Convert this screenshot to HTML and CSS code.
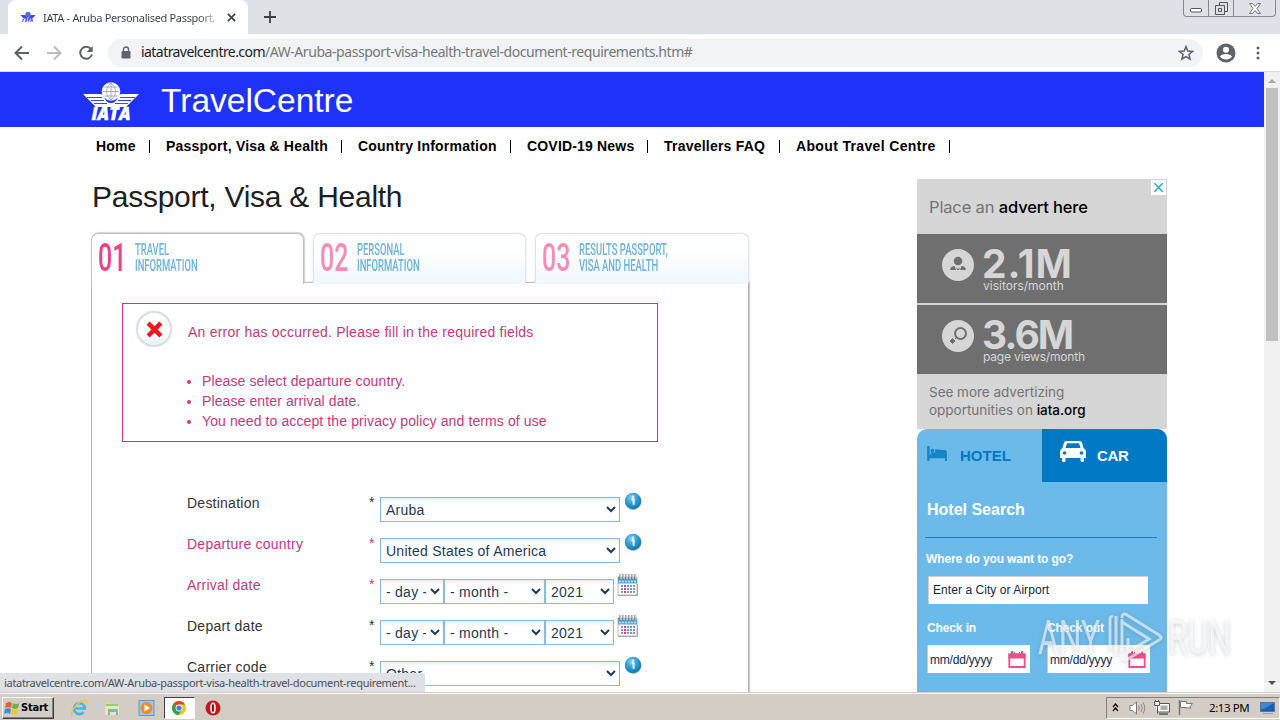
FILE: index.html
```html
<!DOCTYPE html>
<html lang="en">
<head>
  <meta charset="UTF-8" />
  <meta name="viewport" content="width=device-width, initial-scale=1.0" />
  <title>IATA - Aruba Personalised Passport, Visa &amp; Health</title>
  <link rel="stylesheet" href="styles.css">
</head>
<body>
  <svg width="0" height="0" class="defs">
    <defs>
      <radialGradient id="blueBall" cx="40%" cy="30%" r="70%">
        <stop offset="0" stop-color="#7fd0f2" /><stop offset=".55" stop-color="#2a9bd4" /><stop offset="1" stop-color="#1377b0" />
      </radialGradient>
      <symbol id="info" viewBox="0 0 18 18">
        <circle cx="9.3" cy="9.8" r="8.2" fill="#b5bcc2" />
        <circle cx="9" cy="9" r="8.2" fill="url(#blueBall)" />
        <path d="M7.600 7.200h2v5.600" stroke="#fff" stroke-width="1.900" fill="none" />
        <circle cx="9" cy="4.600" r="1.200" fill="#fff" />
      </symbol>
      <symbol id="calendar" viewBox="0 0 22 24">
        <path d="M1 4h19v18H1z" fill="#fff" stroke="#bbb" />
        <path d="M1 22.500h19.500V11" fill="none" stroke="#a5a5a5" />
        <path d="M1 4h19v6.500H1z" fill="#57a8d8" />
        <path d="M2 8.500h17" stroke="#b8dcf2" stroke-width="1.500" stroke-dasharray="2 1" />
        <path d="M3 1v6M6 1v6M9 1v6M12 1v6M15 1v6M18 1v6" stroke="#777" stroke-width="1.200" />
        <path d="M4 1v5M7 1v5M10 1v5M13 1v5M16 1v5M19 1v5" stroke="#e4e4e4" stroke-width="1" />
        <path d="M4 13h14M4 16h14M4 19h14" stroke="#7f97c4" stroke-width="2" stroke-dasharray="2 1" />
        <path d="M7 16h2M7 19h2M7 13h2" stroke="#d23c9c" stroke-width="2" />
      </symbol>
      <symbol id="date" viewBox="0 0 18 18">
        <path d="M1.300 3.500h15.400v12.500H1.300z" fill="#fff" stroke="#ee4d8b" stroke-width="1.800" />
        <path d="M.5 2.500h17v5H.5zM3 0h2v4H3zM13 0h2v4h-2zM6 1h1v2H6zM11 1h1v2h-1z" fill="#ee4d8b" />
      </symbol>
      <symbol id="iata" viewBox="0 0 58 38">
        <path d="M1 12h17q3 0 4 3 2 6 7 6t7-6q1-3 4-3h17l-13 13H14z" />
        <path d="M5 15.500h15M9 18.500h13M12 21.500h13M53 15.500H38M49 18.500H36M46 21.500H33" class="feathers" />
        <circle cx="29" cy="9.500" r="9.300" />
        <path d="M29 1v17M21 9.500h16M22.500 5h13M22.500 14h13M29 1c-6 5-6 12 0 17M29 1c6 5 6 12 0 17" fill="none" class="globe" />
      </symbol>
    </defs>
  </svg>

  <div class="window">
    <div class="tab-strip">
      <div class="tab">
        <svg class="favicon" viewBox="0 0 58 38"><use href="#iata" /><path d="M9 36l4-10M19 36l4-9 2 9M28 28h9M32 28l-2 8M38 36l5-9 3 9" stroke="#4a5be0" stroke-width="4" fill="none" /></svg>
        <span class="tab-title">IATA - Aruba Personalised Passport,</span>
        <svg class="tab-close" viewBox="0 0 10 10"><path d="M1 1l8 8M9 1L1 9" /></svg>
      </div>
      <svg class="new-tab" viewBox="0 0 12 12"><path d="M6 0v12M0 6h12" /></svg>
      <div class="win-buttons">
        <span class="win-min"><svg viewBox="0 0 13 5"><rect x=".5" y=".5" width="11" height="3.500" rx="1" fill="#fff" stroke="#555" /></svg></span>
        <span class="win-max"><svg viewBox="0 0 13 13"><path d="M4.500 3V.5h8v9H10M.5 3.500h9v9h-9zM3.500 6.500h3v3h-3z" fill="none" stroke="#555" /></svg></span>
        <span class="win-close"><svg viewBox="0 0 12 11"><path d="M.5.5h3L6 3.500 8.500.5h3L8 5.500l3.500 5h-3L6 7.500l-2.500 3h-3L4 5.500z" fill="#fff" stroke="#777" /></svg></span>
      </div>
    </div>

    <div class="toolbar">
      <svg class="nav-icon" viewBox="0 0 16 16"><path d="M15 8H2M8 1.500L1.500 8 8 14.500" /></svg>
      <svg class="nav-icon disabled" viewBox="0 0 16 16"><path d="M1 8h13M8 1.500L14.500 8 8 14.500" /></svg>
      <svg class="nav-icon" viewBox="0 0 16 16"><path d="M13.300 4.500A6 6 0 1 0 14 9.500" /><path d="M14.700 1v6h-6z" class="fill" /></svg>
      <div class="omnibox">
        <svg class="lock" viewBox="0 0 10 13"><path d="M2.500 6V3.500a2.500 2.500 0 0 1 5 0V6" fill="none" stroke="#5f6368" stroke-width="1.400" /><rect x="0.500" y="5" width="9" height="7.500" rx="1" fill="#5f6368" /></svg>
        <span class="url"><b>iatatravelcentre.com</b>/AW-Aruba-passport-visa-health-travel-document-requirements.htm#</span>
        <svg class="star" viewBox="0 0 16 16"><path d="M8 1.600l1.800 4.500 4.800.3-3.700 3.100 1.200 4.700L8 11.600l-4.100 2.600 1.200-4.700L1.400 6.400l4.800-.3z" /></svg>
      </div>
      <svg class="profile" viewBox="0 0 20 20"><circle cx="10" cy="10" r="9.500" fill="#5f6368" /><circle cx="10" cy="6.800" r="3" fill="#fff" /><path d="M4 13.600c1.500-3.400 10.500-3.400 12 0-2.600 4-9.400 4-12 0z" fill="#fff" /></svg>
      <svg class="menu-dots" viewBox="0 0 4 14"><circle cx="2" cy="2" r="1.500" /><circle cx="2" cy="7" r="1.500" /><circle cx="2" cy="12" r="1.500" /></svg>
    </div>

    <div class="viewport">
      <div class="page">
        <header class="site-header">
          <div class="logo">
            <svg viewBox="0 0 58 26"><use href="#iata" width="58" height="38" /></svg>
            <span>IATA</span>
          </div>
          <span class="site-name">TravelCentre</span>
        </header>
        <nav class="site-nav">
          <a class="w-home">Home</a>
          <a class="w-passport">Passport, Visa &amp; Health</a>
          <a class="w-country">Country Information</a>
          <a class="w-covid">COVID-19 News</a>
          <a class="w-faq">Travellers FAQ</a>
          <a class="w-about">About Travel Centre</a>
        </nav>

        <div class="columns">
          <main class="content">
            <h1>Passport, Visa &amp; Health</h1>
            <div class="steps">
              <div class="step active"><span class="num">01</span><span class="step-text">TRAVEL<br>INFORMATION</span></div>
              <div class="step"><span class="num">02</span><span class="step-text">PERSONAL<br>INFORMATION</span></div>
              <div class="step"><span class="num">03</span><span class="step-text">RESULTS PASSPORT,<br>VISA AND HEALTH</span></div>
            </div>
            <div class="panel">
              <div class="error-box">
                <div class="error-icon"><svg viewBox="0 0 16 16"><path d="M2 2l12 12M14 2L2 14" /></svg></div>
                <div class="error-text">
                  <p>An error has occurred. Please fill in the required fields</p>
                  <ul>
                    <li>Please select departure country.</li>
                    <li>Please enter arrival date.</li>
                    <li>You need to accept the privacy policy and terms of use</li>
                  </ul>
                </div>
              </div>

              <form class="travel-form">
                <div class="row">
                  <label>Destination</label><span class="req">*</span>
                  <select class="wide"><option>Aruba</option></select>
                  <svg class="info"><use href="#info" /></svg>
                </div>
                <div class="row missing">
                  <label>Departure country</label><span class="req">*</span>
                  <select class="wide"><option>United States of America</option></select>
                  <svg class="info"><use href="#info" /></svg>
                </div>
                <div class="row missing">
                  <label>Arrival date</label><span class="req">*</span>
                  <select class="day"><option>- day -</option></select><select class="month"><option>- month -</option></select><select class="year"><option>2021</option></select>
                  <svg class="cal"><use href="#calendar" /></svg>
                </div>
                <div class="row">
                  <label>Depart date</label><span class="req">*</span>
                  <select class="day"><option>- day -</option></select><select class="month"><option>- month -</option></select><select class="year"><option>2021</option></select>
                  <svg class="cal"><use href="#calendar" /></svg>
                </div>
                <div class="row">
                  <label>Carrier code</label><span class="req">*</span>
                  <select class="wide"><option>Other</option></select>
                  <svg class="info"><use href="#info" /></svg>
                </div>
              </form>
            </div>
          </main>

          <aside class="sidebar">
            <div class="advert">
              <svg class="ad-close" viewBox="0 0 16 16"><path d="M3.500 3.500l9 9M12.500 3.500l-9 9" /></svg>
              <div class="ad-top">Place an <b>advert here</b></div>
              <div class="ad-stat">
                <svg viewBox="0 0 32 32"><circle cx="16" cy="16" r="16" fill="#d6d6d6" /><circle cx="16" cy="12" r="4.300" fill="#6f6f6f" /><path d="M8 21c.5-3 2-4 4.500-4l3.500 3 3.500-3c2.500 0 4 1 4.500 4z" fill="#6f6f6f" /><path d="M13 17l1.500 4M19 17l-1.500 4" stroke="#d6d6d6" /></svg>
                <div><strong>2.1M</strong><small>visitors/month</small></div>
              </div>
              <div class="ad-stat">
                <svg viewBox="0 0 32 32"><circle cx="16" cy="16" r="16" fill="#d6d6d6" /><circle cx="18.500" cy="13.500" r="5.500" fill="none" stroke="#6f6f6f" stroke-width="2" /><path d="M8 21l2.500-2.500L13 21l-2.500 2.500zM13 19l2-2" fill="#6f6f6f" stroke="#6f6f6f" /></svg>
                <div><strong class="views">3.6M</strong><small class="views-label">page views/month</small></div>
              </div>
              <div class="ad-bottom">See more advertizing<br>opportunities on <b>iata.org</b></div>
            </div>

            <div class="booking">
              <div class="book-tabs">
                <div class="book-tab"><svg class="bed" viewBox="0 0 22 16"><path d="M0 0h2.500v9.500H21V16h-2v-3H2.500v3H0z" /><circle cx="5.500" cy="5" r="2" /><path d="M3.500 7h5V3.500L20 4.500q1 .5 1 5H3.500z" /></svg>HOTEL</div>
                <div class="book-tab dark"><svg class="car" viewBox="0 0 26 21"><path d="M6.500 0h13q2 0 2.500 1.500L23.500 7Q26 8 26 10.500V17h-2v2.500q0 1.500-1.700 1.500t-1.800-1.500V17h-15v2.500Q5.500 21 3.700 21T2 19.500V17H0v-6.500Q0 8 2.500 7L4 1.500Q4.500 0 6.500 0z" /><path d="M7 2.300h12l1.500 4.700h-15z" fill="#0078c4" /><circle cx="4.500" cy="12" r="1.800" fill="#0078c4" /><circle cx="21.500" cy="12" r="1.800" fill="#0078c4" /></svg>CAR</div>
              </div>
              <h2>Hotel Search</h2>
              <div class="field-label where">Where do you want to go?</div>
              <div class="city">Enter a City or Airport</div>
              <div class="dates">
                <div><div class="field-label">Check in</div><div class="date-box">mm/dd/yyyy<svg><use href="#date" /></svg></div></div>
                <div><div class="field-label">Check out</div><div class="date-box">mm/dd/yyyy<svg><use href="#date" /></svg></div></div>
              </div>
            </div>
          </aside>
        </div>
      </div>
      <div class="scrollbar">
        <svg viewBox="0 0 8 4"><path d="M0 4l4-4 4 4z" fill="#a3a3a3" /></svg>
        <div class="thumb"></div>
        <svg class="down" viewBox="0 0 8 4"><path d="M0 0l4 4 4-4z" fill="#505050" /></svg>
      </div>
      <div class="status">iatatravelcentre.com/AW-Aruba-passport-visa-health-travel-document-requirement...</div>
      <div class="watermark">
        <span>ANY</span>
        <svg viewBox="0 0 58 54"><path d="M3 40V9q0-3 3-2M9 46V6M15 9v33M15 8q0-6 5-3l32 20q4 3 0 5L21 49q-5 3-6-2M15 12l27 17-21 13V28" /></svg>
        <span>RUN</span>
      </div>
    </div>

    <div class="taskbar">
      <div class="start">
        <svg viewBox="0 0 16 16"><path d="M2 3q3-2 6 0L7 8Q4 6.500 1 8z" fill="#e8622c" /><path d="M9 3.200q3 1.500 6 0L14 8q-3 1.800-6 0z" fill="#6db33f" /><path d="M1 9q3-1.500 6 0l-1 5q-3-2-6 0z" fill="#3d8ede" /><path d="M8 9.300q3 1.500 6 0l-1 5q-3 1.500-6 0z" fill="#f7c325" /></svg>
        Start
      </div>
      <div class="task"><svg viewBox="0 0 18 18"><path d="M4.500 9.500h10.300a5.400 5.400 0 1 0-1.200 3.600" fill="none" stroke="#45b4ec" stroke-width="2.600" /><path d="M2 16.500C-.5 13 8 2 15 1.500c2-.1 2 2 .8 4" fill="none" stroke="#f0c33a" stroke-width="1.300" /></svg></div>
      <div class="task"><svg viewBox="0 0 18 18"><path d="M2 3h5l1 2h7v11H2z" fill="#f2d675" /><path d="M3 5h12v4H3z" fill="#8fcf7a" /><path d="M2 7h14v9H2z" fill="#f7e6a0" /><path d="M5 16v-5q0-1 1-1h8q1 0 1 1v5h-2v-3H7v3z" fill="#6db7e4" /></svg></div>
      <div class="task"><svg viewBox="0 0 18 18"><rect x="2" y="1.500" width="15" height="15" fill="#9cc7ea" stroke="#5c9bcb" /><circle cx="9.500" cy="9" r="6" fill="#f58a1f" /><path d="M7.500 5.500v7l5.500-3.500z" fill="#fff" /></svg></div>
      <div class="task pressed"><svg viewBox="0 0 18 18"><circle cx="9" cy="9" r="7" fill="#f2c51d" /><path d="M9 9L2.900 5.500A7 7 0 0 1 15.100 5.500H9z" fill="#dc4433" /><path d="M2.900 5.500A7 7 0 0 0 8.500 16L12 10.500 9 9z" fill="#2da44e" /><circle cx="9" cy="9" r="3.400" fill="#fff" /><circle cx="9" cy="9" r="2.600" fill="#3f7fe8" /></svg></div>
      <div class="task"><svg viewBox="0 0 18 18"><circle cx="9" cy="9" r="7.500" fill="#c5161d" /><ellipse cx="9" cy="9" rx="2" ry="4.800" fill="#8c1015" stroke="#fff" stroke-width="1.600" /></svg></div>
      <div class="tray">
        <svg class="chevrons" viewBox="0 0 7 9"><path d="M1 4l2.500-3L6 4M1 8l2.500-3L6 8" fill="none" stroke="#000" stroke-width="1.300" /></svg>
        <svg class="speaker" viewBox="0 0 17 14"><path d="M1 4.500h2.500L7.500 1v12L3.500 9.500H1z" fill="#fff" stroke="#777" /><path d="M9.500 4.500q1.500 2.500 0 5M12 3q2.500 4 0 8M14 1.500q3.500 5.500 0 11" fill="none" stroke="#888" /></svg>
        <svg class="network" viewBox="0 0 16 15"><path d="M3.500 3.500h12v8.500h-12z" fill="#fff" stroke="#555" /><path d="M6.500 5.500h7v4.500h-7z" fill="#aaa" /><path d="M5 14h9" stroke="#555" stroke-width="1.500" /><path d="M.5 1.500h5v4h-2v8M1.500 0v2M4.500 0v2M.5 1.500v4h3" fill="#fff" stroke="#555" /></svg>
        <svg class="flag" viewBox="0 0 16 15"><path d="M1.500 0v15" stroke="#777" stroke-width="1.500" /><path d="M2.500 1.500h6v2h6l-2.500 3 1 1.500H8.500V7.500h-6z" fill="#fff" stroke="#777" /></svg>
        <span>2:13 PM</span>
        <svg class="desktop" viewBox="0 0 16 14"><path d="M.5 1.500h14v9H.5z" fill="#1c5fb4" stroke="#4e77a8" /><path d="M1 2h13L4 8H1z" fill="#3f86d4" /><path d="M3 12.500h10" stroke="#99b" /></svg>
      </div>
    </div>
  </div>
</body>
</html>
```
FILE: styles.css
```css
* {
  box-sizing: border-box;
}
body {
  margin: 0;
  font-family: "Liberation Sans", Arial, sans-serif;
  background: #fff;
}
svg {
  display: block;
  flex: none;
}
.defs {
  position: absolute;
}
.window {
  width: 1280px;
  height: 720px;
  display: flex;
  flex-direction: column;
  overflow: hidden;
}

/* browser chrome */
.tab-strip {
  height: 34px;
  display: flex;
  background: #dee1e6;
  padding-left: 8px;
  flex: none;
}
.tab {
  width: 240px;
  background: #fff;
  border-radius: 8px 8px 0 0;
  display: flex;
  align-items: center;
  padding: 0 11px 0 12px;
}
.favicon {
  width: 16px;
  height: 12px;
  fill: #4a5be0;
}
.favicon .globe {
  stroke: #fff;
}
.tab-title {
  width: 176px;
  margin-left: 7px;
  white-space: nowrap;
  font: 11px "Noto Sans", sans-serif;
  letter-spacing: -0.320px;
  color: transparent;
  background: linear-gradient(to right, #3c4043 88%, #ddd);
  background-clip: text;
  -webkit-background-clip: text;
}
.tab-close {
  width: 9px;
  height: 9px;
  margin-left: 8px;
  stroke: #3c4043;
  stroke-width: 1.800;
}
.new-tab {
  width: 12px;
  height: 12px;
  margin: 11px 0 0 16px;
  stroke: #3c4043;
  stroke-width: 1.800;
}
.win-buttons {
  display: flex;
  margin-left: auto;
  margin-right: 4px;
  height: 17px;
  border: 1px solid #85898f;
  border-top: none;
  border-radius: 0 0 4px 4px;
}
.win-buttons span {
  width: 25px;
  display: flex;
  justify-content: center;
  border-left: 1px solid #85898f;
}
.win-buttons .win-min {
  width: 24px;
  border-left: none;
  padding-top: 8px;
}
.win-min svg {
  width: 13px;
  height: 5px;
}
.win-max svg {
  width: 13px;
  height: 13px;
  margin-top: 2px;
}
.win-buttons .win-close {
  width: 42px;
}
.win-close svg {
  width: 12px;
  height: 11px;
  margin-top: 3px;
}
.toolbar {
  height: 38px;
  display: flex;
  align-items: center;
  background: #fff;
  border-bottom: 1px solid #dadce0;
  padding: 0 20px 0 14px;
  flex: none;
}
.nav-icon {
  width: 16px;
  height: 16px;
  margin-right: 16px;
  fill: none;
  stroke: #5f6368;
  stroke-width: 2;
}
.nav-icon .fill {
  fill: #5f6368;
  stroke: none;
}
.nav-icon.disabled {
  stroke: #babcbe;
}
.omnibox {
  width: 1095px;
  height: 28px;
  margin-left: -2px;
  border-radius: 14px;
  background: #f1f3f4;
  display: flex;
  align-items: center;
  padding: 0 9px 0 13px;
}
.lock {
  width: 10px;
  height: 13px;
}
.url {
  margin-left: 10px;
  font: 14px "Noto Sans", sans-serif;
  letter-spacing: -0.440px;
  color: #74787c;
  white-space: nowrap;
  position: relative;
  top: -1px;
}
.url b {
  font-weight: normal;
  letter-spacing: -0.560px;
  color: #202124;
}
.star {
  width: 16px;
  height: 16px;
  margin-left: auto;
  fill: none;
  stroke: #5f6368;
  stroke-width: 1.500;
}
.profile {
  width: 20px;
  height: 20px;
  margin-left: 13px;
}
.menu-dots {
  width: 4px;
  height: 14px;
  margin-left: 20px;
  fill: #5f6368;
}

/* page */
.viewport {
  height: 620px;
  display: flex;
  position: relative;
  overflow: hidden;
  flex: none;
}
.page {
  width: 1264px;
  height: 620px;
  overflow: hidden;
}
.scrollbar {
  width: 16px;
  height: 620px;
  background: #f1f1f1;
  display: flex;
  flex-direction: column;
  align-items: center;
}
.scrollbar svg {
  width: 8px;
  height: 4px;
  margin: 7px 0 5px;
}
.scrollbar .down {
  margin: auto 0 7px;
}
.thumb {
  width: 12px;
  height: 253px;
  background: #c1c1c1;
}
.site-header {
  height: 55px;
  background: #1e32fa;
  color: #fff;
  display: flex;
  padding-left: 82px;
}
.logo {
  width: 58px;
  padding-top: 10px;
  text-align: center;
}
.logo svg {
  width: 58px;
  height: 26px;
  fill: #fff;
}
.globe {
  stroke: #8f9ab0;
  stroke-width: 0.800;
}
.feathers {
  stroke: #1e32fa;
  stroke-width: 0.900;
}
.favicon .feathers {
  stroke: none;
}
.logo span {
  display: block;
  margin-top: -2px;
  font: italic 800 17px/15px "Open Sans", sans-serif;
  letter-spacing: 0.200px;
  -webkit-text-stroke: 0.500px #fff;
}
.site-name {
  margin-left: 21px;
  font-size: 33.500px;
  line-height: 57px;
}
.site-nav {
  display: flex;
  height: 52px;
  padding: 13px 0 0 96px;
  font-size: 14px;
  font-weight: bold;
  letter-spacing: 0.220px;
  line-height: 12px;
  color: #000;
}
.site-nav a {
  height: 13px;
  border-right: 1px solid #000;
  margin-right: 16px;
  white-space: nowrap;
}
.w-home { width: 54px; }
.w-passport { width: 176px; }
.w-country { width: 153px; }
.w-covid { width: 121px; letter-spacing: 0.180px; }
.w-faq { width: 116px; }
.w-about { width: 154px; letter-spacing: 0.350px; }
.columns {
  display: flex;
  padding-left: 91px;
}
.content {
  width: 658px;
}
h1 {
  margin: 0;
  height: 54px;
  font-size: 30px;
  font-weight: normal;
  line-height: 35px;
  letter-spacing: -0.260px;
  color: #1b1f23;
  padding-left: 1px;
}
.steps {
  display: flex;
  gap: 9px;
}
.step {
  width: 213px;
  height: 50px;
  display: flex;
  padding: 8px 0 0 6px;
  border: 1px solid #e1e4e6;
  border-bottom: none;
  border-radius: 7px 7px 0 0;
  background: linear-gradient(#fff 30%, #f1f7fb);
  box-shadow: 0 0 2px #d8dbde;
}
.step:last-child {
  width: 214px;
}
.step.active {
  height: 51px;
  margin-bottom: -1px;
  background: #fff;
  border-color: #c0c2c4;
  position: relative;
  box-shadow: 1px -1px 1px #d0d2d4;
}
.num {
  width: 37px;
  font: 500 39px/32px Roboto, sans-serif;
  color: #f98cb2;
  transform: scaleX(0.640);
  transform-origin: left;
}
.active .num {
  color: #ee4084;
}
.step-text {
  font: 500 16px/16px Roboto, sans-serif;
  color: #6db3dc;
  white-space: nowrap;
  transform: scaleX(0.590);
  transform-origin: left;
}
.panel {
  height: 500px;
  border: 1px solid #b8bbbe;
  border-bottom: none;
  box-shadow: 1px 0 1px #c8cacc;
  padding: 20px 0 0 30px;
  margin-top: -1px;
}
.error-box {
  width: 536px;
  height: 139px;
  border: 1px solid #c9387f;
  display: flex;
  color: #c9387f;
  font-size: 14px;
  letter-spacing: 0.220px;
}
.error-icon {
  width: 36px;
  height: 36px;
  margin: 7px 0 0 13px;
  border: 2px solid #dcdfe2;
  border-radius: 50%;
  background: linear-gradient(#fff 60%, #e6f0f8);
  box-shadow: 0 0 1px #bbb;
  display: flex;
  align-items: center;
  justify-content: center;
}
.error-icon svg {
  width: 17px;
  height: 17px;
  stroke: #f5161c;
  stroke-width: 4;
}
.error-text {
  margin-left: 16px;
}
.error-text p {
  margin: 18px 0 29px;
  line-height: 20px;
}
.error-text ul {
  margin: 0;
  padding-left: 14px;
  line-height: 20px;
  letter-spacing: 0.110px;
}
.error-text li::marker {
  font-size: 14px;
}
.travel-form {
  padding: 51px 0 0 65px;
  font-size: 14px;
  letter-spacing: 0.240px;
  color: #333;
}
.row {
  display: flex;
  height: 41px;
}
.row.missing {
  color: #c9387f;
}
.row label {
  width: 182px;
  line-height: 20px;
}
.req {
  width: 11px;
  line-height: 18px;
}
select {
  height: 25px;
  margin: 4px 0 0;
  padding: 0 1px;
  border: 1px solid #8fb9d8;
  border-radius: 0;
  background: linear-gradient(#e9f2f9, #fff 5px);
  box-shadow: inset 0 0 1px #a9cde4;
  color: #1c3a5c;
  font: 14px "Liberation Sans", Arial, sans-serif;
  letter-spacing: 0.260px;
}
.wide { width: 240px; }
.day { width: 64px; }
.month { width: 101px; }
.year { width: 69px; }
.info {
  width: 18px;
  height: 18px;
  margin: -1px 0 0 4px;
}
.cal {
  width: 22px;
  height: 24px;
  margin: -2px 0 0 3px;
}

/* sidebar */
.sidebar {
  width: 250px;
  margin-left: 168px;
}
.advert {
  position: relative;
  height: 250px;
  background: #d6d6d6;
  font-family: Inter, sans-serif;
  color: #737373;
}
.advert b {
  font-weight: 500;
  color: #000;
}
.ad-close {
  position: absolute;
  right: 1px;
  top: 1px;
  width: 15px;
  height: 15px;
  background: #fff;
  stroke: #21a9c0;
  stroke-width: 1.500;
}
.ad-top {
  height: 55px;
  padding: 17px 0 0 12px;
  font-size: 16.500px;
  line-height: 22px;
  letter-spacing: -0.150px;
}
.ad-stat {
  height: 69px;
  margin-bottom: 2px;
  padding: 15px 0 0 25px;
  background: #6f6f6f;
  display: flex;
  color: #d6d6d6;
}
.ad-stat + .ad-stat {
  margin-bottom: 0;
}
.ad-stat svg {
  width: 32px;
  height: 32px;
}
.ad-stat div {
  margin-left: 8px;
}
.ad-stat strong {
  display: block;
  font-size: 39px;
  line-height: 30px;
  letter-spacing: 0.900px;
}
.ad-stat .views {
  letter-spacing: -1.900px;
}
.ad-stat small {
  display: block;
  margin-left: 1px;
  font-size: 12px;
  line-height: 13px;
  letter-spacing: 0;
}
.ad-stat .views-label {
  letter-spacing: -0.170px;
}
.ad-bottom {
  padding: 9px 0 0 12px;
  font-size: 13.500px;
  line-height: 18px;
  letter-spacing: -0.020px;
}
.booking {
  height: 300px;
  background: #6bbaea;
  border-radius: 10px 10px 0 0;
  overflow: hidden;
  color: #fff;
}
.book-tabs {
  display: flex;
}
.book-tab {
  width: 125px;
  height: 53px;
  display: flex;
  align-items: center;
  padding-left: 10px;
  color: #0078c4;
  font-size: 15px;
  font-weight: bold;
}
.book-tab.dark {
  background: #0078c4;
  color: #fff;
  padding-left: 18px;
  letter-spacing: -0.300px;
}
.bed {
  width: 21px;
  height: 15px;
  margin: -4px 12px 0 0;
  fill: #1583c6;
}
.car {
  width: 26px;
  height: 21px;
  margin: -9px 11px 0 0;
  fill: #fff;
}
.booking h2 {
  margin: 16px 10px 0 8px;
  padding-left: 2px;
  height: 40px;
  font-size: 16px;
  line-height: 24px;
  border-bottom: 1px solid #1583c6;
}
.field-label {
  font-size: 12px;
  font-weight: bold;
  line-height: 16px;
  letter-spacing: -0.120px;
}
.where {
  margin: 13px 0 9px 9px;
}
.city {
  width: 220px;
  height: 28px;
  margin-left: 11px;
  padding-left: 5px;
  background: #fff;
  box-shadow: inset 1px 1px 1px #ccc;
  color: #10294d;
  font-size: 12px;
  line-height: 29px;
  letter-spacing: 0.060px;
}
.dates {
  display: flex;
  gap: 17px;
  padding: 16px 0 0 10px;
}
.date-box {
  width: 103px;
  height: 28px;
  margin-top: 9px;
  padding: 1px 0 0 2px;
  display: flex;
  align-items: center;
  background: #fff;
  border-left: 1px solid #bcd;
  color: #10294d;
  font-size: 12px;
  letter-spacing: -0.200px;
}
.date-box svg {
  width: 18px;
  height: 18px;
  margin-left: auto;
  margin-right: 4px;
}

/* overlays */
.status {
  position: absolute;
  left: 0;
  bottom: 0;
  width: 425px;
  height: 19px;
  padding-left: 4px;
  background: #dee1e6;
  border-radius: 0 3px 0 0;
  color: #4b4f54;
  font: 11px/19px "Noto Sans", sans-serif;
  letter-spacing: -0.310px;
  white-space: nowrap;
}
.watermark {
  position: absolute;
  left: 1038px;
  top: 536px;
  display: flex;
  align-items: center;
  color: rgba(255, 255, 255, 0.600);
  filter: drop-shadow(0 1px 2px rgba(90, 100, 110, 0.500));
}
.watermark span {
  width: 66px;
  margin-top: 3px;
  font: 49px/54px Roboto, sans-serif;
  transform: scaleX(0.650);
  transform-origin: left;
}
.watermark svg {
  width: 58px;
  height: 54px;
  margin: 0 3px 0 3px;
  fill: none;
  stroke: rgba(255, 255, 255, 0.600);
  stroke-width: 3;
}

/* taskbar */
.taskbar {
  height: 28px;
  display: flex;
  align-items: center;
  background: #d4cdc5;
  border-top: 1px solid #d4cdc5;
  box-shadow: inset 0 1px 0 #fff;
  padding: 2px 0 0 2px;
  flex: none;
}
.start {
  width: 52px;
  height: 22px;
  margin-right: 9px;
  display: flex;
  align-items: center;
  border: 1px solid;
  border-color: #fff #404040 #404040 #fff;
  box-shadow: inset -1px -1px 0 #808080;
  font: bold 11px "DejaVu Sans Condensed", sans-serif;
  letter-spacing: -0.200px;
}
.start svg {
  width: 16px;
  height: 16px;
  margin: 0 1px 0 1px;
}
.task {
  width: 31px;
  height: 22px;
  margin-right: 2.600px;
  display: flex;
  align-items: center;
  justify-content: center;
}
.task.pressed {
  background: #fff;
  border: 1px solid;
  border-color: #404040 #fff #fff #404040;
}
.task svg {
  width: 18px;
  height: 18px;
}
.tray {
  width: 174px;
  height: 22px;
  margin-left: auto;
  display: flex;
  align-items: center;
  border: 1px solid;
  border-color: #808080 #fff #fff #808080;
  padding-left: 5px;
  font: 11.500px "Noto Sans", sans-serif;
  letter-spacing: -0.400px;
  white-space: nowrap;
}
.chevrons {
  width: 7px;
  height: 9px;
}
.speaker {
  width: 17px;
  height: 14px;
  margin-left: 10px;
}
.network {
  width: 16px;
  height: 15px;
  margin-left: 8px;
}
.flag {
  width: 16px;
  height: 15px;
  margin-left: 8px;
}
.tray span {
  width: 42px;
  margin-left: 15px;
}
.desktop {
  width: 16px;
  height: 14px;
  margin-left: 9px;
}
```
